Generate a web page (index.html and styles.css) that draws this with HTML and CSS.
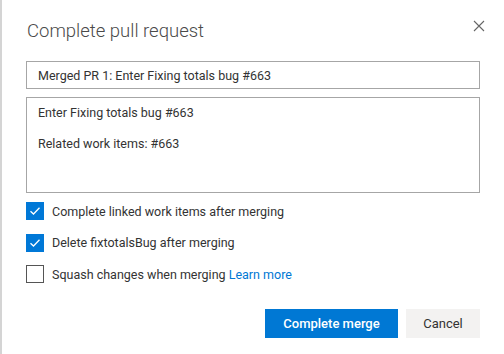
FILE: index.html
```html
<!DOCTYPE html>
<html lang="en">
<head>
  <meta charset="UTF-8" />
  <meta name="viewport" content="width=device-width, initial-scale=1.0"/>
  <title>Complete pull request</title>
  <link rel="stylesheet" href="styles.css">
</head>
<body>

  <div class="page">
    <div class="dialog">
      <div class="dialog-header">
        <h1 class="dialog-title">Complete pull request</h1>
        <button class="close-button" aria-label="Close">
          <svg width="12" height="12" viewBox="0 0 12 12">
            <path d="M1 1 L11 11 M11 1 L1 11" stroke="#666" stroke-width="1.1" fill="none"/>
          </svg>
        </button>
      </div>

      <input type="text" class="title-input" value="Merged PR 1: Enter Fixing totals bug #663" />
      <textarea class="description">Enter Fixing totals bug #663

Related work items: #663</textarea>

      <div class="options">
        <label class="option">
          <span class="check checked">
            <svg width="12" height="10" viewBox="0 0 12 10">
              <path d="M1.5 5.2 L4.5 8 L10.5 1.8" stroke="#fff" stroke-width="1.3" fill="none"/>
            </svg>
          </span>
          <span class="option-text">Complete linked work items after merging</span>
        </label>
        <label class="option">
          <span class="check checked">
            <svg width="12" height="10" viewBox="0 0 12 10">
              <path d="M1.5 5.2 L4.5 8 L10.5 1.8" stroke="#fff" stroke-width="1.3" fill="none"/>
            </svg>
          </span>
          <span class="option-text">Delete fixtotalsBug after merging</span>
        </label>
        <label class="option">
          <span class="check"></span>
          <span class="option-text">Squash changes when merging <a href="#" class="link">Learn more</a></span>
        </label>
      </div>

      <div class="footer">
        <button class="btn btn-primary">Complete merge</button>
        <button class="btn btn-default">Cancel</button>
      </div>
    </div>
  </div>

</body>
</html>
```

FILE: styles.css
```css
body {
  margin: 0;
  background: #fff;
  font-family: Roboto, "Segoe UI", sans-serif;
  font-size: 12.5px;
  color: #333;
}

.page {
  height: 100vh;
  border-left: 2px solid #d4d4d4;
  box-sizing: border-box;
}

.dialog {
  padding: 17px 24px 0 24px;
}

.dialog-header {
  display: flex;
  justify-content: space-between;
  align-items: flex-start;
}

.dialog-title {
  margin: 0;
  font-size: 18.5px;
  font-weight: 300;
  line-height: 28px;
  color: #4a4a4a;
  padding-left: 1px;
}

.close-button {
  background: none;
  border: none;
  padding: 0;
  margin-top: 3px;
  margin-right: -5px;
  width: 12px;
  height: 12px;
  cursor: pointer;
}

.title-input,
.description {
  display: block;
  width: 100%;
  box-sizing: border-box;
  border: 1px solid #a6a6a6;
  font-family: inherit;
  font-size: 12.5px;
  color: #333;
  outline: none;
}

.title-input {
  margin-top: 16px;
  height: 28px;
  padding: 0 11px;
}

.description {
  margin-top: 8px;
  height: 96px;
  padding: 7px 11px;
  line-height: 15.5px;
  resize: none;
}

.options {
  display: flex;
  flex-direction: column;
  gap: 13.5px;
  margin-top: 9px;
}

.option {
  display: flex;
  align-items: center;
  gap: 8px;
  height: 18px;
}

.check {
  width: 18px;
  height: 18px;
  box-sizing: border-box;
  border: 1px solid #555;
  background: #fff;
  display: flex;
  align-items: center;
  justify-content: center;
  flex-shrink: 0;
}

.check.checked {
  background: #0078d7;
  border-color: #0078d7;
}

.link {
  color: #0078d4;
  text-decoration: none;
}

.footer {
  display: flex;
  justify-content: flex-end;
  gap: 8px;
  margin-top: 26px;
}

.btn {
  height: 29px;
  border: none;
  font-family: inherit;
  font-size: 13px;
  cursor: pointer;
}

.btn-primary {
  width: 133px;
  background: #0078d4;
  color: #fff;
  font-weight: 500;
}

.btn-default {
  width: 74px;
  background: #f3f2f1;
  color: #333;
}
```
